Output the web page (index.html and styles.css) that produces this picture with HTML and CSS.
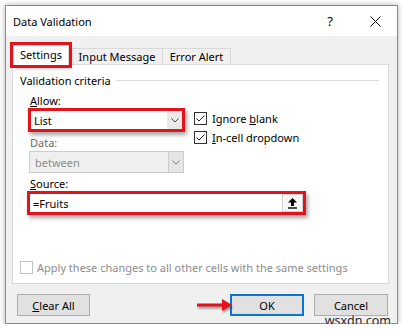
FILE: index.html
```html
<!DOCTYPE html>
<html lang="en">
<head>
	<meta charset="UTF-8">
	<title>Data Validation</title>
	<link rel="stylesheet" href="styles.css">
</head>
<body>
	<div class="window">
		<div class="titlebar">
			<span class="title">Data Validation</span>
			<span class="help">?</span>
			<span class="close">
				<svg width="11" height="11" viewBox="0 0 11 11"><path d="M0.5 0.5 L10.5 10.5 M10.5 0.5 L0.5 10.5" stroke="#111" stroke-width="1" fill="none"/></svg>
			</span>
		</div>
		<div class="main">
			<div class="tabs">
				<div class="tab active mark">Settings</div>
				<div class="tab tab_input">Input Message</div>
				<div class="tab tab_error">Error Alert</div>
			</div>
			<div class="panel">
				<div class="group_title"><span>Validation criteria</span><i></i></div>
				<div class="criteria">
					<div class="col">
						<div class="label label_allow"><u>A</u>llow:</div>
						<div class="combo combo_allow">
							<span class="value">List</span>
							<span class="drop"><svg width="8" height="5" viewBox="0 0 8 5"><path d="M0.5 0.5 L4 4 L7.5 0.5" stroke="#444" fill="none"/></svg></span>
						</div>
						<div class="label label_data dim">Data:</div>
						<div class="combo combo_data">
							<span class="value">between</span>
							<span class="drop"><svg width="8" height="5" viewBox="0 0 8 5"><path d="M0.5 0.5 L4 4 L7.5 0.5" stroke="#777" fill="none"/></svg></span>
						</div>
					</div>
					<div class="checks">
						<div class="check">
							<span class="box"><svg width="11" height="11" viewBox="0 0 11 11"><path d="M1.5 5.5 L4 8 L9.5 2.5" stroke="#222" fill="none"/></svg></span>
							<span>Ignore <u>b</u>lank</span>
						</div>
						<div class="check">
							<span class="box"><svg width="11" height="11" viewBox="0 0 11 11"><path d="M1.5 5.5 L4 8 L9.5 2.5" stroke="#222" fill="none"/></svg></span>
							<span><u>I</u>n-cell dropdown</span>
						</div>
					</div>
				</div>
				<div class="label label_source"><u>S</u>ource:</div>
				<div class="source">
					<span class="value">=Fruits</span>
					<span class="ref"><svg width="11" height="12" viewBox="0 0 11 12"><path d="M5.5 1 L10 5.5 L7 5.5 L7 9 L4 9 L4 5.5 L1 5.5 Z" fill="#000"/><path d="M1 11 L10 11" stroke="#000" stroke-width="1.4"/></svg></span>
				</div>
				<div class="check apply dim">
					<span class="box"></span>
					<span>Apply these changes to all other cells with the same settings</span>
				</div>
			</div>
			<div class="buttons">
				<div class="button"><u>C</u>lear All</div>
				<div class="spacer"></div>
				<div class="button default">OK</div>
				<div class="button">Cancel</div>
			</div>
		</div>
		<svg class="pointer" width="40" height="16" viewBox="0 0 40 16">
			<path d="M1 6.5 L26 6.5 L26 2 L36 8 L26 14 L26 9.5 L1 9.5 Z" fill="#e3131b"/>
		</svg>
		<div class="watermark">wsxdn.com</div>
	</div>
</body>
</html>
```

FILE: styles.css
```css
*{
	margin: 0;
	padding: 0;
	box-sizing: border-box;
}
body{
	background-color: #fff;
	font-family: "Noto Sans", sans-serif;
	font-size: 11px;
	color: #000;
}
.window{
	position: relative;
	display: flex;
	flex-direction: column;
	width: 393px;
	height: 319px;
	margin: 5px 0 0 5px;
	border: 1px solid #8a8a8a;
	background-color: #f0f0f0;
	box-shadow: 0 0 6px rgba(0,0,0,.3);
}
.titlebar{
	display: flex;
	align-items: center;
	height: 30px;
	padding-left: 7px;
	background-color: #fff;
}
.title{
	flex: 1;
	font-size: 11px;
}
.help,.close{
	display: flex;
	justify-content: center;
	align-items: center;
	width: 46px;
	height: 30px;
	font-size: 13px;
}
.close{
	width: 44px;
}
.main{
	padding: 9px 8px 0 6px;
}
.tabs{
	display: flex;
	align-items: flex-end;
	height: 19px;
	padding-left: 1px;
}
.tab{
	height: 16px;
	border: 1px solid #d9d9d9;
	border-bottom: none;
	line-height: 15px;
	text-align: center;
	background-color: #f0f0f0;
}
.tab.active{
	position: relative;
	z-index: 1;
	width: 56px;
	height: 20px;
	margin-bottom: -1px;
	margin-right: 2px;
	line-height: 17px;
	background-color: #fff;
}
.mark{
	outline: 3px solid #e3131b;
	box-shadow: 2px 3px 4px rgba(0,0,0,.35);
}
.tab_input{
	width: 92px;
}
.tab_error{
	width: 69px;
	margin-left: -1px;
}
.panel{
	height: 220px;
	border: 1px solid #d9d9d9;
	background-color: #fff;
}
.group_title{
	display: flex;
	align-items: center;
	height: 16px;
	margin: 7px 9px 0 7px;
}
.group_title i{
	flex: 1;
	margin-left: 5px;
	border-top: 1px solid #dcdcdc;
}
.criteria{
	display: flex;
	margin-left: 15px;
}
.col{
	width: 157px;
}
.label{
	padding-left: 2px;
	line-height: 15px;
}
.dim{
	color: #8c8c8c;
}
.label_allow{
	margin-top: 5px;
}
.label_data{
	margin-top: 3px;
	color: #6d6d6d;
}
.combo{
	display: flex;
	align-items: stretch;
	background-color: #fff;
}
.combo .value,.source .value{
	flex: 1;
	display: flex;
	align-items: center;
	padding-left: 3px;
}
.drop{
	display: flex;
	justify-content: center;
	align-items: center;
	width: 15px;
}
.combo_allow{
	height: 24px;
	border: 3px solid #e3131b;
	box-shadow: 2px 3px 4px rgba(0,0,0,.35);
}
.combo_allow .drop{
	background-color: #e9e9e9;
}
.combo_data{
	width: 155px;
	height: 22px;
	margin: 1px 0 0 1px;
	border: 1px solid #cccccc;
	background-color: #f0f0f0;
	color: #8c8c8c;
}
.combo_data .value{
	padding-left: 5px;
}
.combo_data .drop{
	border-left: 1px solid #cccccc;
	background-color: #e5e5e5;
}
.checks{
	padding: 23px 0 0 9px;
}
.check{
	display: flex;
	align-items: center;
	gap: 5px;
	height: 14px;
	margin-bottom: 5px;
}
.box{
	display: flex;
	justify-content: center;
	align-items: center;
	width: 13px;
	height: 13px;
	border: 1px solid #333;
	background-color: #fff;
}
.label_source{
	margin: 4px 0 0 15px;
	line-height: 14px;
}
.source{
	display: flex;
	width: 279px;
	height: 24px;
	margin-left: 14px;
	border: 3px solid #e3131b;
	box-shadow: 2px 3px 4px rgba(0,0,0,.35);
}
.ref{
	display: flex;
	justify-content: center;
	align-items: center;
	width: 21px;
	border: 1px solid #d0d0d0;
	background-color: #f6f6f6;
}
.apply{
	gap: 4px;
	margin: 45px 0 0 7px;
}
.apply .box{
	border-color: #c4c4c4;
}
.buttons{
	display: flex;
	padding: 10px 1px 0 5px;
}
.spacer{
	flex: 1;
}
.button{
	display: flex;
	justify-content: center;
	align-items: center;
	width: 74px;
	height: 22px;
	margin-left: 10px;
	border: 1px solid #adadad;
	background-color: #e1e1e1;
}
.button:first-child{
	width: 73px;
	margin-left: 0;
}
.button.default{
	border: 2px solid #0a74d0;
}
.pointer{
	position: absolute;
	left: 190px;
	top: 291px;
	filter: drop-shadow(1px 2px 1px rgba(0,0,0,.4));
}
.watermark{
	position: absolute;
	right: 6px;
	bottom: -6px;
	font-size: 12.5px;
	color: #222;
	text-shadow: 0 0 2px #fff, 0 0 2px #fff;
}
```
